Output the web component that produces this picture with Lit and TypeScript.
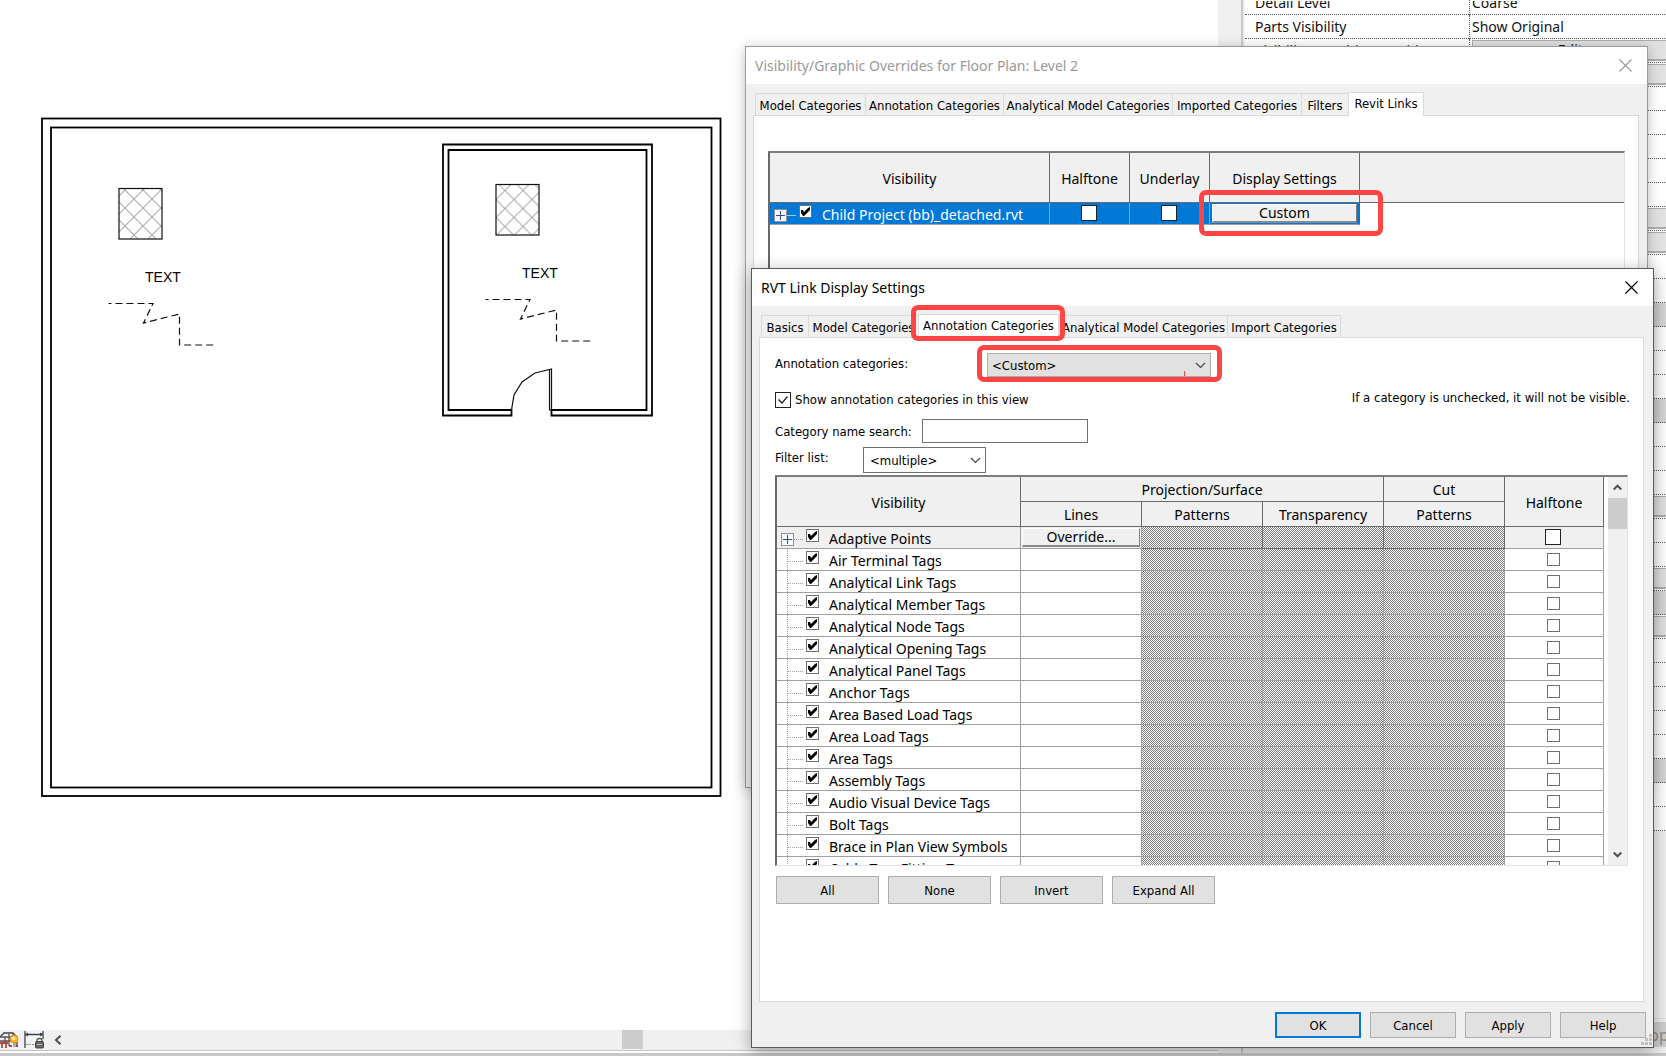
import { LitElement, html, svg, css, nothing } from "lit";
import { customElement, property } from "lit/decorators.js";
import { classMap } from "lit/directives/class-map.js";

const PROPERTY_ROWS: string[] = [
  "text:Detail Level:Coarse",
  "text:Parts Visibility:Show Original",
  "button:Visibility/Graphic Overrides:Edit...",
  "button", "blank", "blank", "blank", "blank", "blank", "button", "button",
  "blank", "blank", "group", "blank", "blank", "blank", "group",
  "blank", "blank", "blank", "button", "blank", "blank", "button", "group", "button",
  "blank", "blank", "blank", "blank", "blank", "group", "blank", "blank",
];

const CATEGORIES = [
  "Adaptive Points",
  "Air Terminal Tags",
  "Analytical Link Tags",
  "Analytical Member Tags",
  "Analytical Node Tags",
  "Analytical Opening Tags",
  "Analytical Panel Tags",
  "Anchor Tags",
  "Area Based Load Tags",
  "Area Load Tags",
  "Area Tags",
  "Assembly Tags",
  "Audio Visual Device Tags",
  "Bolt Tags",
  "Brace in Plan View Symbols",
  "Cable Tray Fitting Tags",
];

/* Plan geometry: outer walls, a nested room with a door, and two annotation groups. */
@customElement("floor-plan")
class FloorPlan extends LitElement {
  static styles = css`
    :host { display: block; }
    svg { display: block; }
    .wall { fill: none; stroke: #000; stroke-width: 1.8; }
    .thin { fill: none; stroke: #111; stroke-width: 1.2; }
    .dash { fill: none; stroke: #111; stroke-width: 1.2; stroke-dasharray: 7 4; stroke-dashoffset: 4; }
    .hatch { fill: none; stroke: #ababab; stroke-width: 1.1; }
    .note { font: 14px "Liberation Sans", sans-serif; fill: #000; }
  `;

  private annotation(x: number, y: number, pattern: string) {
    return svg`
      <g transform="translate(${x} ${y})">
        <rect class="thin" x="0" y="0" width="43" height="50.5" style="fill:url(#${pattern})"></rect>
        <text class="note" x="26" y="93.5">TEXT</text>
        <path class="dash" d="M-10.5 115H34L24.5 134.5L60.5 125.5V156.5H96"></path>
      </g>`;
  }

  render() {
    return html`
      <svg width="744" height="820" viewBox="0 0 744 820" role="img" aria-label="Floor plan">
        <defs>
          <pattern id="a" width="18" height="18" patternUnits="userSpaceOnUse" x="6" y="19.5">
            <path class="hatch" d="M0 0L18 18M18 0L0 18"></path>
          </pattern>
          <pattern id="b" width="18" height="18" patternUnits="userSpaceOnUse" x="9" y="24">
            <path class="hatch" d="M0 0L18 18M18 0L0 18"></path>
          </pattern>
        </defs>
        <rect class="wall" x="42" y="118.5" width="678.5" height="677.5"></rect>
        <rect class="wall" x="51" y="127.5" width="660.5" height="660"></rect>
        <path class="wall" d="M511.5 415.5H443V144.5H652V415.5H551.5V410H646.5V150H448.5V410H511.5Z"></path>
        <path class="thin" d="M511.5 410L514 395L522 382L535 373L551.5 369V410H549.5V370"></path>
        ${this.annotation(119, 188.5, "a")}
        ${this.annotation(496, 184.5, "b")}
      </svg>`;
  }
}

@customElement("property-panel")
class PropertyPanel extends LitElement {
  static styles = css`
    :host {
      display: flex;
      flex-direction: column;
      overflow: hidden;
      background: #f0f0f0;
      border-left: 2px solid #c8c8c8;
      font: 14px/20px "Noto Sans", "Open Sans", sans-serif;
      color: #111;
    }
    .list { flex: 1; padding-left: 2px; overflow: hidden; }
    table { width: 434px; border-spacing: 0; table-layout: fixed; }
    .cut { display: flex; align-items: flex-end; height: 12px; overflow: hidden; }
    td {
      box-sizing: border-box;
      height: 24px;
      padding: 0 0 0 10px;
      white-space: nowrap;
      background: #fff;
      border-bottom: 1px dotted #555;
    }
    tr:first-child td { height: 15px; }
    td + td { padding: 0 0 0 2px; border-left: 1px dotted #555; }
    .name { width: 224px; }
    .group td { background: #d6d6d6; }
    button {
      display: block;
      width: 208px;
      height: 21px;
      padding: 0;
      font: inherit;
      line-height: 18px;
      color: #111;
      background: #e1e1e1;
      border: 1px solid #adadad;
      border-bottom-width: 2px;
    }
    .bar { display: flex; justify-content: flex-end; padding: 3px 0 0; background: #f0f0f0; border-top: 1px solid #e0e0e0; }
    .bar .apply {
      width: 60px;
      height: 25px;
      margin-right: -24px;
      font-size: 16px;
      color: #8c8c8c;
      background: #cfcfcf;
      border: 0;
    }
    .base { height: 6px; }
  `;

  render() {
    return html`
      <div class="list">
        <table aria-label="Properties">
          <colgroup><col class="name" /><col /></colgroup>
          <tbody>${PROPERTY_ROWS.map((row, i) => {
            const [kind, name = "", value = ""] = row.split(":");
            const cell = (text: string) => (i === 0 ? html`<div class="cut">${text}</div>` : text);
            return html`
              <tr class=${kind}>
                <td>${cell(name)}</td>
                <td>${kind === "button"
                  ? html`<button type="button" aria-label=${name || "Edit property"}>${value}</button>`
                  : cell(value)}</td>
              </tr>`;
          })}</tbody>
        </table>
      </div>
      <div class="bar"><button class="apply" type="button" disabled>Apply</button></div>
      <div class="base"></div>`;
  }
}

@customElement("window-frame")
class WindowFrame extends LitElement {
  @property() heading = "";
  @property({ type: Boolean, reflect: true }) inactive = false;

  static styles = css`
    :host {
      display: flex;
      flex-direction: column;
      box-sizing: border-box;
      border: 1px solid #5a5a5a;
      background: #f0f0f0;
      box-shadow: 0 4px 16px rgba(0, 0, 0, 0.35);
    }
    :host([inactive]) { border-color: #9c9c9c; box-shadow: 0 2px 12px rgba(0, 0, 0, 0.25); }
    header {
      display: flex;
      align-items: center;
      justify-content: space-between;
      height: 37px;
      padding: 0 15px 0 9px;
      background: #fff;
      color: #000;
      font: 14px/20px "Noto Sans", "Open Sans", sans-serif;
    }
    :host([inactive]) header { color: #999; }
    h2 { margin: 0; font: inherit; }
    button { display: flex; padding: 0; border: 0; background: none; color: inherit; }
    svg { display: block; }
  `;

  render() {
    return html`
      <header>
        <h2>${this.heading}</h2>
        <button type="button" aria-label="Close">
          <svg width="13" height="13" viewBox="0 0 13 13"><path d="M.5.5l12 12M12.5.5l-12 12" fill="none" stroke="currentColor" stroke-width="1.2" /></svg>
        </button>
      </header>
      <slot></slot>`;
  }
}

@customElement("app-root")
class AppRoot extends LitElement {
  static styles = css`
    :host {
      --ui: "Noto Sans", "Open Sans", sans-serif;
      --form: "DejaVu Sans Condensed", "DejaVu Sans", sans-serif;
      --mark: #ff4444;
      display: block;
      position: relative;
      height: 100vh;
      overflow: hidden;
      background: #fff;
      color: #000;
      font: 13px/16px var(--form);
    }
    * { box-sizing: border-box; }
    button, input, select { margin: 0; font: inherit; color: inherit; border-radius: 0; }

    .workspace { display: grid; grid-template-columns: 1fr 23px 425px; height: 100%; border-bottom: 3px solid #c8c8c8; }
    .view { display: flex; flex-direction: column; justify-content: space-between; min-width: 0; }
    .vscroll { background: #f0f0f0; }
    .status { padding-bottom: 2px; }
    .statusbar { display: flex; align-items: center; height: 21px; background: #f0f0f0; border-bottom: 1px solid #c4c4c4; }
    .tool { display: flex; padding: 0; border: 0; background: #f4f4f4; }
    .tool.lock { margin-left: 5px; }
    .back { display: flex; margin-left: 10px; padding: 0; border: 0; background: none; }
    .track { flex: 1; height: 100%; padding-left: 560px; }
    .thumb { width: 21px; height: 19px; background: #cdcdcd; }

    .outer { position: absolute; left: 745px; right: 18px; top: 46px; height: 742px; }
    .inner { position: absolute; left: 751px; right: 12px; top: 268px; bottom: 8px; }

    .tabs { display: grid; justify-content: start; align-items: end; padding: 8px 0 0 9px; height: 31px; }
    .outer .tabs { grid-template-columns: 110px 138px 169px 129px 47px 76px; }
    .inner .tabs { grid-template-columns: 47px 110px 141px 168px 114px; }
    .tab {
      position: relative;
      height: 22px;
      padding: 2px 0 0;
      white-space: nowrap;
      text-align: center;
      background: #f0f0f0;
      border: 1px solid #d9d9d9;
      border-right: 0;
      border-bottom: 0;
    }
    .tab:last-child { border-right: 1px solid #d9d9d9; }
    .tab.on { z-index: 1; height: 24px; padding: 0 0 2px; background: #fff; border-right: 1px solid #d9d9d9; margin-bottom: -1px; }
    .pane { flex: 1; background: #fff; border: 1px solid #d9d9d9; }
    .outer .pane { margin: 0 8px 8px 7px; padding: 35px 13px 35px 14px; }
    .inner .pane { margin: 0 9px 0 7px; padding: 15px; }

    .mark { position: absolute; border: 5px solid var(--mark); border-radius: 7px; pointer-events: none; }
    .mark.on-tab { inset: -10px -7px -3px -8px; }
    .mark.on-cell { inset: -13px -24px -12px -11px; }
    .mark.on-list { inset: -8px -11px -5px -10px; }

    table { border-spacing: 0; table-layout: fixed; font: 14px/20px var(--ui); }
    th { font-weight: 400; padding: 2px 0 0; background: #f0f0f0; border: 0 solid #6a6a6a; border-width: 0 1px 1px 0; }
    td { padding: 0; height: 22px; line-height: 20px; border: 0 solid #a0a0a0; border-width: 0 1px 1px 0; }
    .grid { border: 0 solid #696969; border-width: 2px 1px 1px 2px; border-right-color: #e3e3e3; border-bottom-color: #e3e3e3; border-top-color: #7c7c7c; }

    .links { height: 560px; }
    .links table { width: 100%; }
    .links th { height: 50px; }
    .links th:last-child { border-right: 0; }
    .c-name { width: 280px; }
    .c-flag { width: 80px; }
    .c-set { width: 150px; }
    .picked td { background: #0078d7; color: #fff; }
    .picked td:last-child { background: #fff; border: 0; }
    .picked .setting { position: relative; padding: 0 2px; border-right-color: #0078d7; }

    .tree { display: flex; align-items: center; height: 21px; white-space: nowrap; }
    .tree input { flex: none; margin: 0 10px 4px 3px; }
    .tree label { line-height: 19px; padding-top: 2px; }
    .branch { flex: none; align-self: stretch; width: 16px; margin-left: 10px; border-left: 1px dotted #a0a0a0;
      background: repeating-linear-gradient(90deg, #a0a0a0 0 1px, transparent 1px 2px) 0 12px / 100% 1px no-repeat; }
    .expand { flex: none; width: 13px; height: 13px; margin: 3px 0 0 4px; padding: 0; border: 0; background: #fff; display: flex; }
    .stub { flex: none; width: 9px; height: 1px; margin-top: 3px; background: repeating-linear-gradient(90deg, #a0a0a0 0 1px, transparent 1px 2px); }
    .picked .stub { background: #9cc8ee; }

    input[type="checkbox"] { appearance: none; display: block; width: 13px; height: 13px; background: #fff; border: 1px solid #707070; }
    input.bold:checked::before {
      content: "";
      display: block;
      width: 11px;
      height: 11px;
      background: #000;
      clip-path: polygon(1px 4px, 3px 4px, 4px 6px, 8px 2px, 10px 1px, 10px 4px, 5px 9px, 4px 10px, 3px 10px, 1px 7px);
    }
    input[type="checkbox"].large { width: 16px; height: 16px; border-color: #222; }
    input.large:checked::before {
      content: "";
      display: block;
      width: 14px;
      height: 14px;
      background: #222;
      clip-path: polygon(2px 7px, 3px 6px, 6px 9px, 11px 3px, 12px 4px, 6px 11px);
    }
    td.flag { padding: 0 2px 0 0; }
    .flag input[type="checkbox"] { margin: 0 auto; }
    .flag input[type="checkbox"].large { margin: 0 auto 2px; }
    .raised {
      display: block;
      width: 100%;
      height: 19px;
      padding: 0;
      font: 14px/16px var(--ui);
      color: #000;
      background: #f0f0f0;
      border: 1px solid #fff;
      border-right-color: #7d7d7d;
      border-bottom: 2px solid #8a8a8a;
    }

    .row { display: flex; align-items: center; }
    .row.source { height: 24px; }
    .row.show { height: 32px; margin-top: 5px; }
    .row.search { height: 24px; margin-top: 5px; }
    .row.filter { height: 26px; margin: 4px 0 2px; }
    .row.source label { width: 212px; padding-bottom: 2px; }
    .row.search label { width: 147px; padding-top: 2px; }
    .row.filter label { width: 88px; padding-bottom: 4px; }
    .check { display: flex; align-items: center; gap: 4px; padding-top: 4px; }
    .hint { margin: 0 -2px 0 auto; }
    .search input { width: 166px; height: 24px; padding: 0 5px; background: #fff; border: 1px solid #707070; }
    .select { position: relative; display: grid; align-items: center; }
    .select > * { grid-area: 1 / 1; }
    .select svg { justify-self: end; margin-right: 5px; pointer-events: none; }
    select { appearance: none; height: 26px; padding: 2px 24px 0 6px; background: #fff; border: 1px solid #707070; }
    .source select { width: 224px; height: 24px; padding-left: 4px; background: #e1e1e1; border-color: #adadad; }
    .filter select { width: 123px; }
    .caret { position: absolute; right: 26px; bottom: 1px; width: 1px; height: 5px; background: var(--mark); }

    .categories { display: flex; height: 391px; overflow: hidden; }
    .categories table { flex: 1; }
    .categories th { height: 25px; }
    .n { width: 244px; }
    .w { width: 121px; }
    .first td { background: #f0f0f0; }
    .categories td.na { background: repeating-conic-gradient(#808080 0 25%, #f8f8f8 0 50%) 0 0 / 2px 2px; }
    .first td.na { border-color: #6a6a6a; }
    .first .line { padding: 0 1px; }
    .scroll { display: flex; flex-direction: column; width: 19px; margin-left: 4px; background: #f0f0f0; }
    .scroll button { display: flex; align-items: center; justify-content: center; height: 21px; padding: 0; border: 0; background: none; }
    .scroll .knob { height: 31px; background: #cdcdcd; }
    .scroll .rest { flex: 1; }

    .push { height: 28px; width: 103px; padding: 2px 0 0; text-align: center; background: #e1e1e1; border: 1px solid #adadad; }
    .bulk { display: flex; gap: 9px; padding: 10px 0 0 1px; }
    .actions { position: relative; display: flex; justify-content: flex-end; gap: 9px; padding: 10px 7px 9px; }
    .actions .push { width: 86px; height: 26px; }
    .actions .push.ok { border: 2px solid #0078d7; }
    .grip { position: absolute; right: 1px; bottom: 2px; }
  `;

  private expander() {
    return html`
      <button class="expand" type="button" aria-label="Expand">
        <svg width="13" height="13" viewBox="0 0 13 13">
          <rect x=".5" y=".5" width="12" height="12" fill="#f8f8f8" stroke="#919191" />
          <path d="M2 6.5h9M6.5 2v9" stroke="#2f4a92" fill="none" />
        </svg>
      </button>
      <span class="stub"></span>`;
  }

  private tabs(names: string[], current: string, marked = false) {
    return html`
      <div class="tabs" role="tablist">
        ${names.map((name) => html`
          <button type="button" role="tab" aria-selected=${name === current}
            class=${classMap({ tab: true, on: name === current })}>
            ${name}${marked && name === current ? html`<span class="mark on-tab"></span>` : nothing}
          </button>`)}
      </div>`;
  }

  private chevron() {
    return html`<svg width="11" height="7" viewBox="0 0 11 7"><path d="M1 1l4.500 4.500L10 1" fill="none" stroke="#444" stroke-width="1.2" /></svg>`;
  }

  private outerWindow() {
    return html`
      <window-frame class="outer" inactive heading="Visibility/Graphic Overrides for Floor Plan: Level 2">
        ${this.tabs(["Model Categories", "Annotation Categories", "Analytical Model Categories", "Imported Categories", "Filters", "Revit Links"], "Revit Links")}
        <div class="pane">
          <div class="grid links">
            <table>
              <colgroup><col class="c-name" /><col class="c-flag" /><col class="c-flag" /><col class="c-set" /><col /></colgroup>
              <thead>
                <tr><th>Visibility</th><th>Halftone</th><th>Underlay</th><th>Display Settings</th><th></th></tr>
              </thead>
              <tbody>
                <tr class="picked">
                  <td>
                    <div class="tree">${this.expander()}<input id="link" class="bold" type="checkbox" checked /><label for="link">Child Project (bb)_detached.rvt</label></div>
                  </td>
                  <td class="flag"><input class="large" type="checkbox" aria-label="Halftone" /></td>
                  <td class="flag"><input class="large" type="checkbox" aria-label="Underlay" /></td>
                  <td class="setting"><button class="raised" type="button">Custom</button><span class="mark on-cell"></span></td>
                  <td></td>
                </tr>
              </tbody>
            </table>
          </div>
        </div>
      </window-frame>`;
  }

  private categoryRow(name: string, i: number) {
    const first = i === 0;
    return html`
      <tr class=${classMap({ first })}>
        <td>
          <div class="tree">
            ${first ? this.expander() : html`<span class="branch"></span>`}
            <input id="cat-${i}" class="bold" type="checkbox" checked />
            <label for="cat-${i}">${name}</label>
          </div>
        </td>
        <td class="line">${first ? html`<button class="raised" type="button">Override...</button>` : nothing}</td>
        <td class="na"></td><td class="na"></td><td class="na"></td>
        <td class="flag"><input class=${first ? "large" : "plain"} type="checkbox" aria-label="Halftone ${name}" /></td>
      </tr>`;
  }

  private innerWindow() {
    return html`
      <window-frame class="inner" heading="RVT Link Display Settings">
        ${this.tabs(["Basics", "Model Categories", "Annotation Categories", "Analytical Model Categories", "Import Categories"], "Annotation Categories", true)}
        <div class="pane">
          <div class="row source">
            <label for="source">Annotation categories:</label>
            <div class="select">
              <select id="source"><option>&lt;Custom&gt;</option></select>${this.chevron()}
              <span class="caret"></span><span class="mark on-list"></span>
            </div>
          </div>
          <div class="row show">
            <label class="check"><input class="large" type="checkbox" checked />Show annotation categories in this view</label>
            <p class="hint">If a category is unchecked, it will not be visible.</p>
          </div>
          <div class="row search">
            <label for="search">Category name search:</label>
            <input id="search" type="text" />
          </div>
          <div class="row filter">
            <label for="filter">Filter list:</label>
            <div class="select"><select id="filter"><option>&lt;multiple&gt;</option></select>${this.chevron()}</div>
          </div>
          <div class="grid categories">
            <table>
              <colgroup><col class="n" /><col class="w" /><col class="w" /><col class="w" /><col class="w" /><col /></colgroup>
              <thead>
                <tr><th rowspan="2">Visibility</th><th colspan="3">Projection/Surface</th><th>Cut</th><th rowspan="2">Halftone</th></tr>
                <tr><th>Lines</th><th>Patterns</th><th>Transparency</th><th>Patterns</th></tr>
              </thead>
              <tbody>${CATEGORIES.map((name, i) => this.categoryRow(name, i))}</tbody>
            </table>
            <div class="scroll">
              <button type="button" aria-label="Scroll up"><svg width="9" height="7" viewBox="0 0 9 7"><path d="M.7 5.500L4.500 1.700L8.300 5.500" fill="none" stroke="#505050" stroke-width="2" /></svg></button>
              <div class="knob"></div>
              <div class="rest"></div>
              <button type="button" aria-label="Scroll down"><svg width="9" height="7" viewBox="0 0 9 7"><path d="M.7 1.500L4.500 5.300L8.300 1.500" fill="none" stroke="#505050" stroke-width="2" /></svg></button>
            </div>
          </div>
          <div class="bulk">
            ${["All", "None", "Invert", "Expand All"].map((t) => html`<button class="push" type="button">${t}</button>`)}
          </div>
        </div>
        <div class="actions">
          <button class="push ok" type="button">OK</button>
          <button class="push" type="button">Cancel</button>
          <button class="push" type="button">Apply</button>
          <button class="push" type="button">Help</button>
          <svg class="grip" width="11" height="11" viewBox="0 0 11 11" fill="#bfbfbf">
            <path d="M8 0h3v3H8zM8 4h3v3H8zM4 4h3v3H4zM8 8h3v3H8zM4 8h3v3H4zM0 8h3v3H0z" />
          </svg>
        </div>
      </window-frame>`;
  }

  render() {
    return html`
      <div class="workspace">
        <div class="view">
          <floor-plan></floor-plan>
          <div class="status">
            <div class="statusbar">
              <button class="tool" type="button" aria-label="Reveal hidden elements">
                <svg width="19" height="18" viewBox="0 0 19 18" fill="none">
                  <path d="M0 6L4 2H13L17 6V16" stroke="#39424c" stroke-width="1.300" />
                  <path d="M0 6H11M5 6V11M9 3V15M13 2V5M0 10H12M16 15h2" stroke="#4a5663" stroke-width="1.300" />
                  <path d="M0 12H8M2 10V17M6 10V17M9 15h3" stroke="#b5483a" stroke-width="1.800" />
                  <circle cx="14" cy="8" r="4" fill="#ffb52e" stroke="#f08c1a" />
                  <circle cx="13.500" cy="7.500" r="1.800" fill="#fff0a0" />
                  <path d="M13 13h3M13 15h3" stroke="#667" />
                </svg>
              </button>
              <button class="tool lock" type="button" aria-label="Reveal constraints">
                <svg width="20" height="18" viewBox="0 0 20 18" fill="none">
                  <path d="M1 0V17M19 0V8M1 3.500H19" stroke="#39424c" stroke-width="1.300" />
                  <path d="M1 3.500L4 1.500V5.500ZM19 3.500L16 1.500V5.500Z" fill="#39424c" />
                  <path d="M2 13.500H11" stroke="#888" stroke-dasharray="2 1" />
                  <path d="M13 11V9.500Q13 7.500 15.500 7.500T18 9.500V11" stroke="#555" stroke-width="1.300" />
                  <rect x="11.500" y="10.500" width="8" height="6.500" rx="1" fill="#666" stroke="#444" />
                  <path d="M13 13.500h5" stroke="#bbb" />
                </svg>
              </button>
              <button class="back" type="button" aria-label="Scroll left">
                <svg width="8" height="10" viewBox="0 0 8 10"><path d="M6.500.7L2 5l4.500 4.300" fill="none" stroke="#505050" stroke-width="2" /></svg>
              </button>
              <div class="track"><div class="thumb"></div></div>
            </div>
          </div>
        </div>
        <div class="vscroll"></div>
        <property-panel></property-panel>
      </div>
      ${this.outerWindow()}${this.innerWindow()}`;
  }
}
